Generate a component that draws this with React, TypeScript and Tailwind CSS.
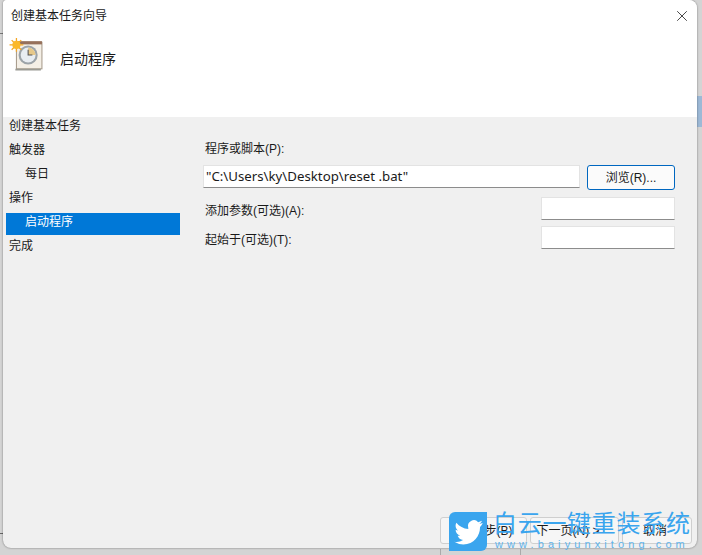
import { X } from 'lucide-react'

const font = "font-['Liberation_Sans','Noto_Sans_CJK_SC',sans-serif]"

function TaskIcon() {
  return (
    <svg width="34" height="34" viewBox="0 0 32 32" className="absolute left-[6px] top-[38px]">
      <rect x="7" y="4" width="24" height="25" fill="#f4efe6" stroke="#a89c8c" />
      <rect x="7" y="3" width="24" height="3" fill="#96705a" />
      <path d="M6 29h24v1.500H6z" fill="#9a9a94" />
      <circle cx="18" cy="16" r="9" fill="#9ca3a8" />
      <circle cx="18" cy="16" r="7" fill="#e8edf2" />
      <path d="M18 9a7 7 0 0 1 7 7h-7z" fill="#e6c88a" />
      <path d="M18 11v5h4" fill="none" stroke="#555" strokeWidth="1" />
      <g stroke="#f5a623" strokeWidth="1.200">
        <path d="M7 0v13M0.500 6.500h13M2.500 2l9 9M11.500 2l-9 9" />
      </g>
      <circle cx="7" cy="6.500" r="3.800" fill="#fbb829" />
    </svg>
  )
}

function Field({ className }: { className: string }) {
  return <div className={`h-[23px] border border-[#e3e3e3] border-b-[#8c8c8c] bg-white ${className}`} />
}

const steps = [
  { label: '创建基本任务' },
  { label: '触发器' },
  { label: '每日', sub: true },
  { label: '操作' },
  { label: '启动程序', sub: true, active: true },
  { label: '完成' },
]

export default function App() {
  return (
    <div className={`relative h-[555px] w-[702px] overflow-hidden bg-[#d4d4d4] ${font} text-[12px] text-[#1a1a1a]`}>
      {/* Desktop behind the dialog */}
      <div className="absolute right-0 top-[96px] h-[31px] w-[5px] bg-[#9db9d6]" />
      <div className="absolute left-0 top-[33px] h-[1px] w-[3px] bg-[#777]" />
      <div className="absolute left-0 top-[533px] h-[1px] w-[3px] bg-[#666]" />
      <div className="absolute left-[440px] top-[549px] h-[6px] w-[1px] bg-[#aaa]" />
      <div className="absolute left-[520px] top-[549px] h-[6px] w-[1px] bg-[#aaa]" />

      <div className="relative ml-[3px] flex h-[548px] w-[694px] flex-col overflow-hidden rounded-b-[8px] rounded-tl-[4px] rounded-tr-[8px] bg-[#f0f0f0] shadow-[0_0_2px_rgba(0,0,0,0.5)]">
        {/* Header */}
        <div className="h-[117px] bg-white">
          <div className="flex h-[32px] items-center justify-between pl-[8px] pr-[6px]">
            <span className="leading-[32px]">创建基本任务向导</span>
            <X size={18} strokeWidth={1.1} className="text-[#222]" />
          </div>
          <div className="pl-[57px] pt-[9px] text-[14px] leading-[36px]">启动程序</div>
        </div>

        {/* Body */}
        <div className="flex flex-1">
          <div className="flex w-[177px] flex-col pl-[3px]">
            {steps.map((s) => (
              <div key={s.label} className="h-[24px]">
                <div className={`h-[22px] pt-[1px] leading-[16px] ${s.sub ? 'pl-[19px]' : 'pl-[3px]'} ${s.active ? 'bg-[#0078d7] text-white' : ''}`}>
                  {s.label}
                </div>
              </div>
            ))}
          </div>
          <div className="flex flex-1 flex-col pl-[23px] pr-[22px] pt-[24px]">
            <div className="pl-[2px] leading-[16px]">程序或脚本(P):</div>
            <div className="mt-[8px] flex items-start justify-between">
              <div className="flex h-[23px] w-[377px] items-center border border-[#e3e3e3] border-b-[#8c8c8c] bg-white pl-[2px] font-['Noto_Sans',sans-serif] text-[13.25px]">
                "C:\Users\ky\Desktop\reset .bat"
              </div>
              <button className="h-[25px] w-[88px] rounded-[3px] border border-[#0067c0] bg-[#fbfbfb] text-[12px]">
                浏览(R)...
              </button>
            </div>
            <div className="mt-[7px] flex items-start justify-between pl-[2px]">
              <span className="mt-[6px] leading-[16px]">添加参数(可选)(A):</span>
              <Field className="w-[134px]" />
            </div>
            <div className="mt-[6px] flex items-start justify-between pl-[2px]">
              <span className="mt-[6px] leading-[16px]">起始于(可选)(T):</span>
              <Field className="w-[134px]" />
            </div>
            <div className="mt-auto mb-[4px] -mr-[17px] flex justify-end gap-[3px]">
              <button className="h-[27px] w-[87px] rounded-[3px] border border-[#cfcfcf] bg-[#f6f6f6] pl-[6px]">上一步(B)</button>
              <button className="h-[27px] w-[89px] rounded-[3px] border border-[#cfcfcf] bg-[#f6f6f6] pr-[13px]">下一页(N) &gt;</button>
              <button className="h-[27px] w-[70px] rounded-[3px] border border-[#cfcfcf] bg-[#f6f6f6] pr-[4px]">取消</button>
            </div>
          </div>
        </div>
        <TaskIcon />
      </div>

      {/* Watermark */}
      <div className="absolute left-[449px] top-[512px] flex h-[39px] w-[38px] items-center justify-center rounded-tl-[6px] rounded-br-[6px] bg-[#3aa5ee]">
        <svg viewBox="0 0 24 24" width="31" height="31" fill="white">
          <path d="M23 5.500c-.8.400-1.700.600-2.600.700.900-.600 1.600-1.400 2-2.500-.900.500-1.900.900-2.900 1.100A4.500 4.500 0 0 0 11.800 9c0 .400 0 .700.100 1C8.100 9.800 4.800 8 2.600 5.200c-.400.700-.600 1.500-.600 2.300 0 1.600.800 3 2 3.800-.700 0-1.400-.200-2-.600 0 2.200 1.600 4.100 3.600 4.500-.700.200-1.400.200-2 .100.600 1.800 2.200 3.100 4.200 3.200A9 9 0 0 1 1 19.900 12.800 12.800 0 0 0 8 22c8.300 0 12.900-6.900 12.900-12.900v-.600c.800-.700 1.600-1.500 2.100-3z" />
        </svg>
      </div>
      <div className="absolute left-[493px] top-[511px] flex flex-col whitespace-nowrap">
        <div className="text-[24px] leading-[26px] tracking-[0.7px] text-[#3aa5ee]">白云一键重装系统</div>
        <div className="mt-[1px] pl-[2px] text-[11px] leading-[12px] tracking-[4.1px] text-[#5fb3ea]">www.baiyunxitong.com</div>
      </div>
    </div>
  )
}
